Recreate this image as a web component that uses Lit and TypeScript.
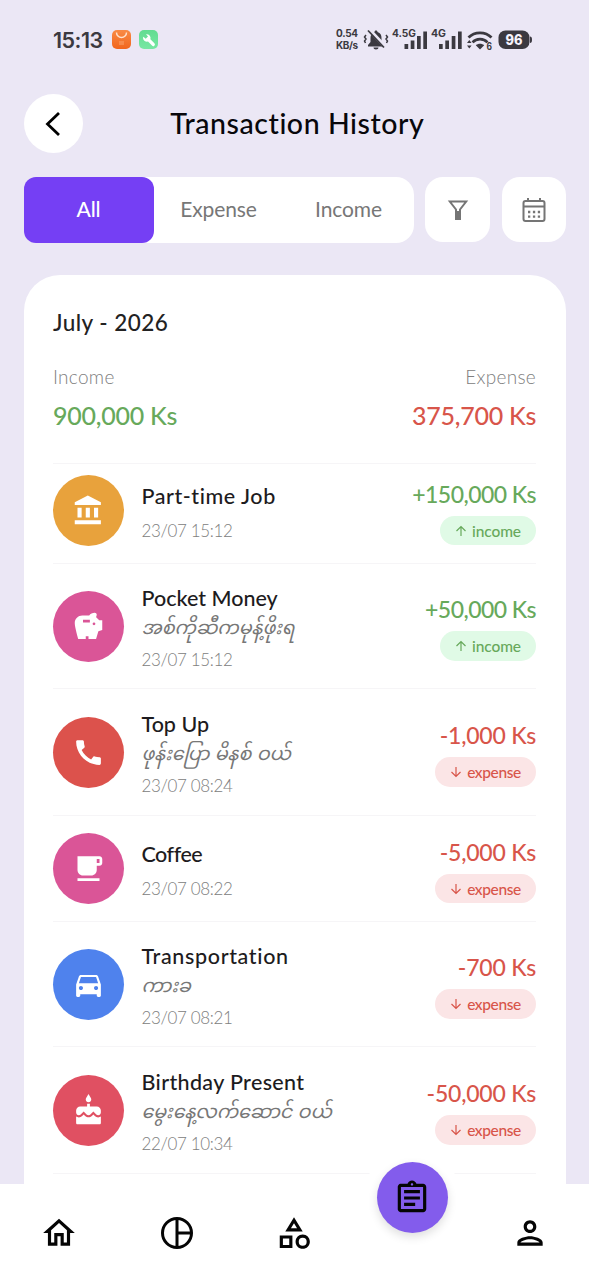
import { LitElement, html, css, svg, nothing } from "lit";
import { customElement, property } from "lit/decorators.js";

const paths: Record<string, string> = {
  bank: "M4 10v7h3v-7H4zm6 0v7h3v-7h-3zM2 22h19v-3H2v3zm14-12v7h3v-7h-3zm-4.5-9L2 6v2h19V6l-9.5-5z",
  savings: "M19.83 7.5l-2.27-2.27c.07-.42.18-.81.32-1.15.08-.18.12-.37.12-.58 0-.83-.67-1.5-1.5-1.5-1.64 0-3.09.79-4 2h-5C4.46 4 2 6.46 2 9.5S4.5 21 4.5 21H10v-2h2v2h5.5l1.68-5.59 2.82-.94V7.5h-2.17zM13 9H8V7h5v2zm3 2c-.55 0-1-.45-1-1s.45-1 1-1 1 .45 1 1-.45 1-1 1z",
  call: "M20.01 15.38c-1.23 0-2.42-.2-3.53-.56-.35-.12-.74-.03-1.01.24l-1.57 1.97c-2.83-1.35-5.48-3.9-6.89-6.83l1.95-1.66c.27-.28.35-.67.24-1.02-.37-1.11-.56-2.3-.56-3.53 0-.54-.45-.99-.99-.99H4.19C3.65 3 3 3.24 3 3.99 3 13.28 10.73 21 20.01 21c.71 0 .99-.63.99-1.18v-3.45c0-.54-.45-.99-.99-.99z",
  cafe: "M20 3H4v10c0 2.21 1.79 4 4 4h6c2.21 0 4-1.79 4-4v-3h2c1.11 0 2-.89 2-2V5c0-1.11-.89-2-2-2zm0 5h-2V5h2v3zM4 19h16v2H4z",
  car: "M18.92 6.01C18.72 5.42 18.16 5 17.5 5h-11c-.66 0-1.21.42-1.42 1.01L3 12v8c0 .55.45 1 1 1h1c.55 0 1-.45 1-1v-1h12v1c0 .55.45 1 1 1h1c.55 0 1-.45 1-1v-8l-2.08-5.99zM6.5 16c-.83 0-1.5-.67-1.5-1.5S5.67 13 6.5 13s1.5.67 1.5 1.5S7.33 16 6.5 16zm11 0c-.83 0-1.5-.67-1.5-1.5s.67-1.5 1.5-1.5 1.5.67 1.5 1.5-.67 1.5-1.5 1.5zM5 11l1.5-4.5h11L19 11H5z",
  cake: "M12 6c1.11 0 2-.9 2-2 0-.38-.1-.73-.29-1.03L12 0l-1.71 2.97c-.19.3-.29.65-.29 1.03 0 1.1.9 2 2 2zm4.6 9.99l-1.07-1.07-1.08 1.07c-1.3 1.3-3.58 1.31-4.89 0l-1.07-1.07-1.09 1.07C6.75 16.64 5.88 17 4.96 17c-.73 0-1.4-.23-1.96-.61V21c0 .55.45 1 1 1h16c.55 0 1-.45 1-1v-4.61c-.56.38-1.23.61-1.96.61-.92 0-1.79-.36-2.44-1.01zM18 9h-5V7h-2v2H6c-1.66 0-3 1.34-3 3v1.54c0 1.08.88 1.96 1.96 1.96.52 0 1.02-.2 1.38-.57l2.14-2.13 2.13 2.13c.74.74 2.03.74 2.77 0l2.14-2.13 2.13 2.13c.37.37.86.57 1.38.57 1.08 0 1.96-.88 1.96-1.96V12C21 10.34 19.66 9 18 9z",
  home: "M12 5.69l5 4.5V18h-2v-6H9v6H7v-7.81l5-4.5M12 3L2 12h3v8h6v-6h2v6h6v-8h3L12 3z",
  category: "M12 2l-5.5 9h11L12 2zm0 3.84L13.93 9h-3.87L12 5.84zM17.5 13c-2.49 0-4.5 2.01-4.5 4.5s2.01 4.5 4.5 4.5 4.5-2.01 4.5-4.5-2.01-4.5-4.5-4.5zm0 7a2.5 2.5 0 010-5 2.5 2.5 0 010 5zM3 21.5h8v-8H3v8zm2-6h4v4H5v-4z",
  person: "M12 6c1.1 0 2 .9 2 2s-.9 2-2 2-2-.9-2-2 .9-2 2-2m0 10c2.7 0 5.8 1.29 6 2H6c.23-.72 3.31-2 6-2m0-12C9.79 4 8 5.79 8 8s1.79 4 4 4 4-1.79 4-4-1.79-4-4-4zm0 10c-2.67 0-8 1.34-8 4v2h16v-2c0-2.66-5.33-4-8-4z",
  assignment: "M7 15h7v2H7zm0-4h10v2H7zm0-4h10v2H7zm12-4h-4.18C14.4 1.84 13.3 1 12 1c-1.3 0-2.4.84-2.82 2H5c-.14 0-.27.01-.4.04-.39.08-.74.28-1.01.55-.18.18-.33.4-.43.64-.1.23-.16.49-.16.77v14c0 .27.06.54.16.78s.25.45.43.64c.27.27.62.47 1.01.55.13.02.26.03.4.03h14c1.1 0 2-.9 2-2V5c0-1.1-.9-2-2-2zm-7-.25c.41 0 .75.34.75.75s-.34.75-.75.75-.75-.34-.75-.75.34-.75.75-.75zM19 19H5V5h14v14z",
};

const glyph = (name: string, size: number) => html`<svg
  width=${size} height=${size} viewBox="0 0 24 24" fill="currentColor"
>${svg`<path d=${paths[name]}></path>`}</svg>`;

interface Transaction {
  icon: string;
  tone: string;
  name: string;
  tracking: number;
  note?: string;
  date: string;
  amount: string;
  kind: "income" | "expense";
  height: number;
}

const transactions: Transaction[] = [
  { icon: "bank", tone: "#e8a23c", name: "Part-time Job", tracking: 0.55, date: "23/07 15:12", amount: "+150,000 Ks", kind: "income", height: 106 },
  { icon: "savings", tone: "#da5597", name: "Pocket Money", tracking: 0, note: "အစ်ကိုဆီကမုန့်ဖိုးရ", date: "23/07 15:12", amount: "+50,000 Ks", kind: "income", height: 125 },
  { icon: "call", tone: "#dc524c", name: "Top Up", tracking: 0, note: "ဖုန်းပြော မိနစ် ဝယ်", date: "23/07 08:24", amount: "-1,000 Ks", kind: "expense", height: 127 },
  { icon: "cafe", tone: "#da5597", name: "Coffee", tracking: -0.5, date: "23/07 08:22", amount: "-5,000 Ks", kind: "expense", height: 106 },
  { icon: "car", tone: "#4f82ed", name: "Transportation", tracking: 0.65, note: "ကားခ", date: "23/07 08:21", amount: "-700 Ks", kind: "expense", height: 125 },
  { icon: "cake", tone: "#e05062", name: "Birthday Present", tracking: 0.35, note: "မွေးနေ့လက်ဆောင် ဝယ်", date: "22/07 10:34", amount: "-50,000 Ks", kind: "expense", height: 127 },
];

@customElement("status-bar")
class StatusBar extends LitElement {
  static styles = css`
    :host { display: flex; align-items: center; justify-content: space-between; height: 80px; padding: 0 57px 0 53px; box-sizing: border-box; color: #3b3940; }
    .left { display: flex; align-items: center; }
    .time { font: 600 21.5px/30px Inter, sans-serif; letter-spacing: -0.5px; width: 58px; white-space: nowrap; }
    .apps { display: block; }
    .right { display: block; }
    .small { font: 700 10px Inter, sans-serif; }
    .battery { font: 800 14px Inter, sans-serif; }
  `;
  render() {
    return html`
      <div class="left">
        <span class="time">15:13</span>
        <svg class="apps" width="50" height="22" viewBox="0 0 50 22">
          <defs>
            <linearGradient id="o" x2="0" y2="1"><stop stop-color="#f98b45"/><stop offset="1" stop-color="#f1661d"/></linearGradient>
            <linearGradient id="g" x2="0" y2="1"><stop stop-color="#62dc91"/><stop offset="1" stop-color="#78e7a3"/></linearGradient>
          </defs>
          <rect x="1" y="1" width="19" height="19" rx="5" fill="url(#o)"/>
          <path d="M5.5 3.5a5 5 0 0 0 10 0" fill="none" stroke="#ffe2cc" stroke-width="1.5"/>
          <path d="M8 13h5M8 15h5" stroke="#fba56f" stroke-width="1"/>
          <rect x="28" y="1" width="19" height="19" rx="5" fill="url(#g)"/>
          <path d="M32 9a4 4 0 0 0 5 3.6l4 4a1.5 1.5 0 0 0 2.4-2.3l-4-4A4 4 0 0 0 35 5.2l2 2.3-2.3 2.2-2.4-2z" fill="#fff"/>
        </svg>
      </div>
      <svg class="right" width="197" height="26" viewBox="335 27 197 26" fill="currentColor">
        <text class="small" x="336" y="37" textLength="22">0.54</text>
        <text class="small" x="336" y="48.5" textLength="22">KB/s</text>
        <path d="M376 30.5c1 0 1.5.7 1.5 1.5 3 .8 4 3.2 4 6v4l2.5 3v1.5h-16V45l2.5-3v-4c0-2.8 1-5.2 4-6 0-.8.5-1.5 1.5-1.5zM373.5 47.5h5c0 1.3-1 2-2.5 2s-2.5-.7-2.5-2z"/>
        <path d="M368.5 29l17 18" stroke="#ebe7f5" stroke-width="4"/>
        <path d="M368 30.5l16 17" stroke="currentColor" stroke-width="1.8"/>
        <path d="M366 35l-1.5 2 1.5 2-1.5 2 1 2M386 35l1.5 2-1.5 2 1.5 2-1 2" fill="none" stroke="currentColor" stroke-width="1.5"/>
        <text class="small" x="392" y="37" textLength="24" lengthAdjust="spacingAndGlyphs">4.5G</text>
        <path d="M404.5 44h3.7v5h-3.7zM410.700 40.5h3.7V49h-3.7zM417 36h3.7v13H417zM423.300 31.5h3.7V49h-3.7z"/>
        <text class="small" x="431" y="37" textLength="15" lengthAdjust="spacingAndGlyphs">4G</text>
        <path d="M439 44h3.7v5H439zM445.300 40.5h3.7V49h-3.7zM451.700 36h3.7v13h-3.7zM458 31.5h3.7V49H458z"/>
        <g fill="none" stroke="currentColor" stroke-width="2.7">
          <path d="M468.5 37.5c6-6.3 17-6.3 23 0"/><path d="M472.5 42.3c4-4.3 11-4.3 15 0"/>
        </g>
        <path d="M480 49.5l-4.2-4.3c2.5-2 5.9-2 8.4 0zM467 43l2.3-3 2.3 3zM467 45.5h4.6l-2.3 3z"/>
        <text class="small" x="486.5" y="49.5" textLength="5.5" lengthAdjust="spacingAndGlyphs">6</text>
        <rect x="498.5" y="30.5" width="31" height="18.5" rx="7"/>
        <path d="M530 36.5q2 0 2 3.3t-2 3.3z"/>
        <text class="battery" x="505.5" y="45" textLength="17" lengthAdjust="spacingAndGlyphs" fill="#f5f2fb">96</text>
      </svg>`;
  }
}

@customElement("transaction-row")
class TransactionRow extends LitElement {
  @property({ attribute: false }) item!: Transaction;
  static styles = css`
    :host { display: block; font-variant-ligatures: none; }
    .row { display: flex; align-items: center; box-sizing: border-box; border-bottom: 1.5px solid #f6f5f7; }
    .badge { width: 71px; height: 71px; border-radius: 50%; flex: none; display: flex; align-items: center; justify-content: center; color: #fff; }
    .info { flex: 1; margin-left: 17.5px; display: flex; flex-direction: column; padding-top: 2px; white-space: nowrap; }
    .info.noted { padding-top: 3.5px; }
    .name { font-size: 21.5px; line-height: 28px; font-weight: 500; color: #1d1b20; }
    .note { font: italic 19px/30px Lato, "Noto Sans Myanmar", Padauk, sans-serif; color: #777; height: 29px; word-spacing: 1px; }
    .date { font-size: 17px; line-height: 22px; font-weight: 300; color: #808080; letter-spacing: -.35px; margin-top: 10px; }
    .noted .date { margin-top: 8px; }
    .side { display: flex; flex-direction: column; align-items: flex-end; padding-top: 3px; }
    .amount { font-size: 23px; line-height: 30px; font-weight: 500; white-space: nowrap; letter-spacing: -.22px; }
    .amount.income { letter-spacing: -.55px; }
    .pill { height: 29.5px; border-radius: 15px; display: flex; align-items: center; justify-content: center; gap: 5px; font-size: 15.5px; margin-top: 7px; width: 96px; font-weight: 500; }
    .income { color: #67a95b; } .expense { color: #d8554a; }
    .pill.income { background: #e0fae6; letter-spacing: -.1px; } .pill.expense { background: #fbe5e6; width: 101px; letter-spacing: -.4px; }
  `;
  render() {
    const t = this.item;
    return html`<div class="row" style="height:${t.height}px">
      <div class="badge" style="background:${t.tone}">${glyph(t.icon, 33)}</div>
      <div class="info ${t.note ? "noted" : ""}">
        <div class="name" style="letter-spacing:${t.tracking}px">${t.name}</div>
        ${t.note ? html`<div class="note">${t.note}</div>` : nothing}
        <div class="date">${t.date}</div>
      </div>
      <div class="side">
        <div class="amount ${t.kind}">${t.amount}</div>
        <div class="pill ${t.kind}">
          <svg width="12" height="12" viewBox="0 0 12 12" fill="none" stroke="currentColor" stroke-width="1.2">
            ${t.kind === "income" ? svg`<path d="M6 11V1.5M1.5 6L6 1.5 10.5 6"/>` : svg`<path d="M6 1v9.5M1.5 6L6 10.5 10.5 6"/>`}
          </svg><span>${t.kind}</span>
        </div>
      </div>
    </div>`;
  }
}

@customElement("app-root")
class AppRoot extends LitElement {
  static styles = css`
    :host { display: flex; flex-direction: column; height: 1280px; overflow: hidden; background: #ebe7f5; font-family: Lato, "Noto Sans", sans-serif; font-variant-ligatures: none; }
    .header { display: grid; grid-template-columns: 59px 1fr 59px; align-items: center; padding: 14px 18px 0 23.5px; height: 59px; flex: none; }
    .back { width: 59px; height: 59px; border-radius: 50%; background: #fff; display: flex; align-items: center; justify-content: center; }
    .title { text-align: center; font-size: 28.5px; line-height: 34px; padding-bottom: 2px; font-weight: 500; color: #08070b; white-space: nowrap; letter-spacing: .55px; }
    .filters { display: flex; align-items: flex-start; padding: 24px 23px 0 23.5px; flex: none; height: 66px; }
    .tabs { display: grid; grid-template-columns: repeat(3, 1fr); width: 390px; height: 66px; background: #fff; border-radius: 18px; }
    .tab { display: flex; align-items: center; justify-content: center; font-size: 21px; line-height: 26px; padding-bottom: 2px; color: #777; letter-spacing: -.1px; }
    .tab.active { background: #753ff4; color: #fff; border-radius: 12px; font-weight: 500; }
    .square { width: 65px; height: 65px; border-radius: 18px; background: #fff; margin-left: 11.5px; display: flex; align-items: center; justify-content: center; color: #757575; }
    .square.last { width: 64px; }
    .card { flex: 1; min-height: 0; margin: 32px 23px 0 23.5px; background: #fff; border-radius: 36px 36px 0 0; padding: 0 30px 0 29.5px; }
    .month { padding-top: 32px; font-size: 22.5px; line-height: 31px; font-weight: 500; color: #222; letter-spacing: .45px; }
    .totals { display: flex; justify-content: space-between; margin-top: 26px; height: 100px; border-bottom: 1.5px solid #f6f5f7; box-sizing: border-box; }
    .total { white-space: nowrap; }
    .total.right { text-align: right; }
    .label { font-size: 19px; line-height: 26px; font-weight: 300; color: #808080; letter-spacing: .3px; }
    .value { font-size: 25px; line-height: 34px; font-weight: 500; margin-top: 8px; letter-spacing: -.25px; }
    .green { color: #67a95b; } .red { color: #d8554a; }
    .list { margin-top: -6px; }
    .nav { position: relative; flex: none; height: 96px; background: #fff; display: grid; grid-template-columns: repeat(5, 1fr); place-items: center; color: #050505; }
    .notch { position: relative; top: -35.5px; width: 98px; height: 98px; border-radius: 50%; background: #fff; display: flex; align-items: center; justify-content: center; }
    .fab { width: 71px; height: 71px; border-radius: 50%; background: #835cec; display: flex; align-items: center; justify-content: center; box-shadow: 0 4px 10px rgba(0,0,0,.13); }
  `;
  render() {
    return html`
      <status-bar></status-bar>
      <div class="header">
        <div class="back"><svg width="22" height="28" viewBox="0 0 22 28" fill="none" stroke="#000" stroke-width="2.8"><path d="M17 3L5.500 14 17 25"/></svg></div>
        <div class="title">Transaction History</div>
      </div>
      <div class="filters">
        <div class="tabs">
          <div class="tab active">All</div><div class="tab">Expense</div><div class="tab">Income</div>
        </div>
        <div class="square"><svg width="24" height="24" viewBox="0 0 24 24" fill="none" stroke="currentColor" stroke-width="2"><path d="M3.8 3.5h16.4l-6.2 8V21h-4v-9.5z"/><path d="M12 13v8" stroke-width="4"/></svg></div>
        <div class="square last"><svg width="26" height="28" viewBox="0 0 26 28" fill="none" stroke="currentColor" stroke-width="2"><rect x="2.5" y="5" width="21" height="20" rx="2"/><path d="M2.5 10.5h21M7 2v4M19 2v4"/><path d="M7 16h2.3M11.900 16h2.3M16.800 16h2.3M7 20.700h2.3M11.900 20.700h2.3M16.800 20.700h2.3" stroke-width="2.3"/></svg></div>
      </div>
      <div class="card">
        <div class="month">July - 2026</div>
        <div class="totals">
          <div class="total"><div class="label">Income</div><div class="value green">900,000 Ks</div></div>
          <div class="total right"><div class="label">Expense</div><div class="value red">375,700 Ks</div></div>
        </div>
        <div class="list">${transactions.map((t) => html`<transaction-row .item=${t}></transaction-row>`)}</div>
      </div>
      <div class="nav">
        ${glyph("home", 38)}
        <svg width="38" height="38" viewBox="0 0 38 38" fill="none" stroke="currentColor" stroke-width="3"><circle cx="19" cy="19" r="14.5"/><path d="M19 4.5v29M19 19h14.5"/></svg>
        ${glyph("category", 38)}
        <div class="notch"><div class="fab">${glyph("assignment", 38)}</div></div>
        ${glyph("person", 38)}
      </div>`;
  }
}
